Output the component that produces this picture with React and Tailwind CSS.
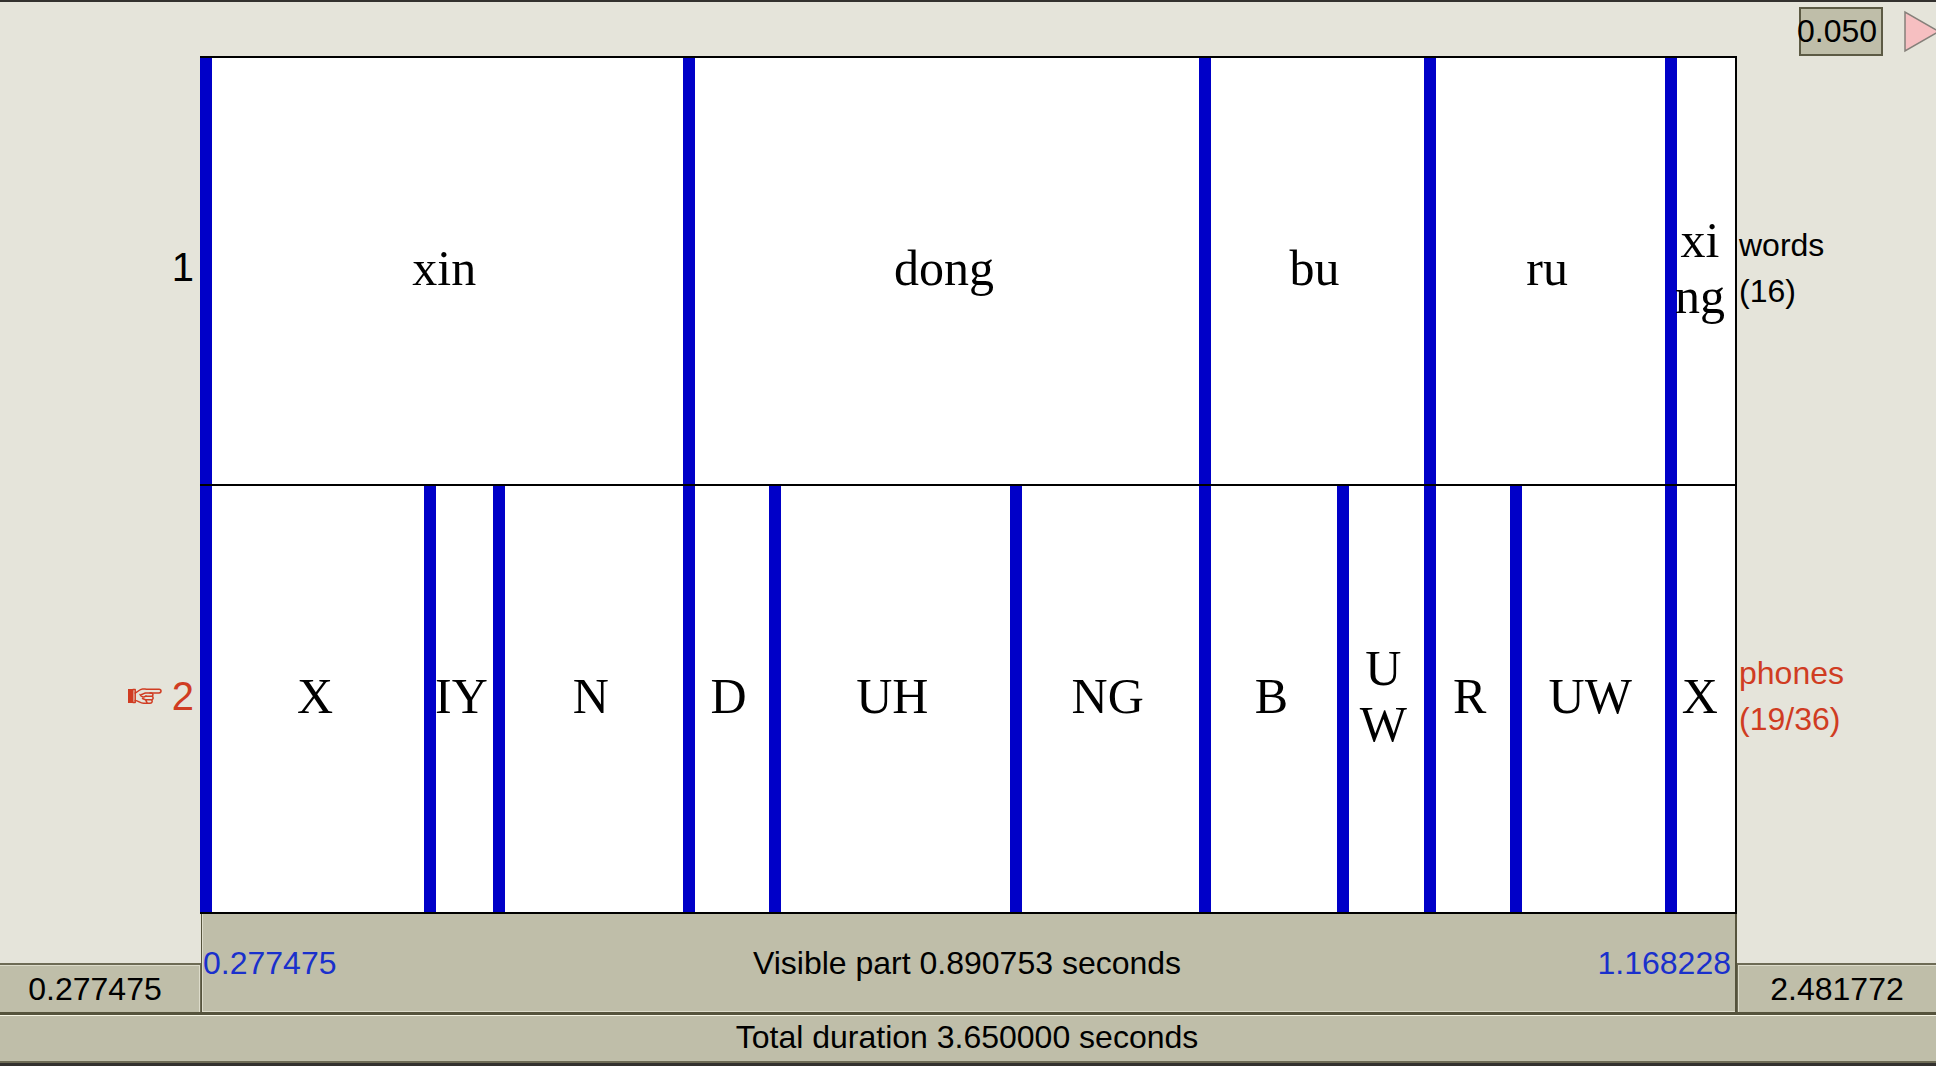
const words = [
  { ms: 280, label: ["xin"] },
  { ms: 300, label: ["dong"] },
  { ms: 130, label: ["bu"] },
  { ms: 140, label: ["ru"] },
  { ms: 40.753, label: ["xi", "ng"] },
];

const phones = [
  { ms: 130, label: ["X"] },
  { ms: 40, label: ["IY"] },
  { ms: 110, label: ["N"] },
  { ms: 50, label: ["D"] },
  { ms: 140, label: ["UH"] },
  { ms: 110, label: ["NG"] },
  { ms: 80, label: ["B"] },
  { ms: 50, label: ["U", "W"] },
  { ms: 50, label: ["R"] },
  { ms: 90, label: ["UW"] },
  { ms: 40.753, label: ["X"] },
];

function PointingHand() {
  return (
    <svg width="34" height="16" viewBox="0 0 34 16" fill="none" stroke="currentColor" strokeWidth="1.5" strokeLinejoin="round" strokeLinecap="round" aria-hidden="true">
      <path d="M0 1h5.500v14H0z" fill="currentColor" stroke="none" />
      <path d="M5 1.400h2.200v13.200H5" />
      <path d="M7.200 5C9.500 4.200 11.500 1 14.500.9c1.500 0 2.500.2 4 .3h12.500c2.700.2 2.700 3.600 0 3.800H22" />
      <path d="M7.200 12.500c3.300.2 4.800 2.600 8.300 2.700h6.500c2.500-.2 2.800-2.600 1.400-3.300 2.300-.6 2.200-3 .6-3.600 1.600-.8 1.200-3-.8-3.400l-5.700 0c-1.400.2-2.400 1.400-4 1.600" />
      <path d="M12 6.500c1 2.500 3.600 3.300 6 1.300M18.500 8.300h5M17.500 11.700h5.500M14.500 10.500l3 1.200 1.500 3" />
    </svg>
  );
}

function Tier({ intervals, className }) {
  const columns = intervals.map((i) => `minmax(0, ${i.ms}fr)`).join(" ");
  return (
    <div className={`grid min-h-0 flex-1 ${className}`} style={{ gridTemplateColumns: columns }}>
      {intervals.map((interval, i) => (
        <div
          key={i}
          className="flex flex-col items-center justify-center border-l-12 border-[#0000c8] pr-1.5 pb-1.5 font-['Liberation_Serif',serif] text-[50px] leading-14 whitespace-nowrap last:pr-3"
        >
          {interval.label.map((line) => (
            <span key={line}>{line}</span>
          ))}
        </div>
      ))}
    </div>
  );
}

export default function App() {
  return (
    <div className="flex min-h-screen flex-col overflow-hidden border-t-2 border-b-3 border-[#33312e] bg-[#e5e4da] font-['Liberation_Sans',sans-serif] text-[32px] leading-[46px] text-black">
      <header className="flex h-[54px] items-start justify-end gap-[21px] pt-[5px]">
        <button className="flex h-[49px] w-[84px] items-center justify-center border-2 border-[#5c5a44] bg-[#bfbea9] pr-2 pb-0.5">0.050</button>
        <button aria-label="Play" className="h-[49px] w-8 overflow-hidden">
          <svg width="36" height="49" viewBox="0 0 36 49" className="max-w-none">
            <path d="M1 5v39L35 24.500z" fill="#f6bfc1" stroke="#85807a" strokeWidth="1.500" />
          </svg>
        </button>
      </header>

      <main className="grid flex-1 grid-cols-[200px_minmax(0,1fr)_199px]">
        <div className="flex flex-col text-[40px]">
          <div className="flex flex-1 items-center justify-end pr-1.5 pb-2">1</div>
          <div className="flex flex-1 items-center justify-end gap-2.5 pr-1.5 pb-2 text-[#d03c22]">
            <PointingHand />2
          </div>
        </div>
        <div className="flex flex-col border-y-2 border-r-2 border-black bg-white">
          <Tier intervals={words} className="" />
          <Tier intervals={phones} className="border-t-2 border-black" />
        </div>
        <div className="flex flex-col pt-0.5">
          <div className="flex flex-1 flex-col justify-center pb-2 pl-0.5">
            <span>words</span>
            <span>(16)</span>
          </div>
          <div className="flex flex-1 flex-col justify-center pb-2 pl-0.5 text-[#d03c22]">
            <span>phones</span>
            <span>(19/36)</span>
          </div>
        </div>
      </main>

      <footer>
        <div className="grid grid-cols-[201px_minmax(0,1fr)_199px] items-end border-b-3 border-[#55533c]">
          <button className="h-[49px] border-t-2 border-r border-[#6d6b55] bg-[#bfbea9] pr-2.5 shadow-[inset_-1px_1px_#dddccb]">0.277475</button>
          <button className="grid h-[98px] grid-cols-[1fr_auto_1fr] items-center border-r-2 border-l border-[#55533c] bg-[#bfbea9] pr-1 pl-px shadow-[inset_1px_-1px_#dddccb]">
            <span className="text-left text-[#1a30cc]">0.277475</span>
            <span>Visible part 0.890753 seconds</span>
            <span className="text-right text-[#1a30cc]">1.168228</span>
          </button>
          <button className="h-[49px] border-t-2 border-l border-[#6d6b55] bg-[#bfbea9] shadow-[inset_1px_1px_#dddccb]">2.481772</button>
        </div>
        <button className="flex h-12 w-full items-start justify-center border-t border-b-2 border-t-[#f6f5e4] border-b-[#6d6b55] bg-[#bfbea9] pr-0.5 leading-[42px]">Total duration 3.650000 seconds</button>
      </footer>
    </div>
  );
}
